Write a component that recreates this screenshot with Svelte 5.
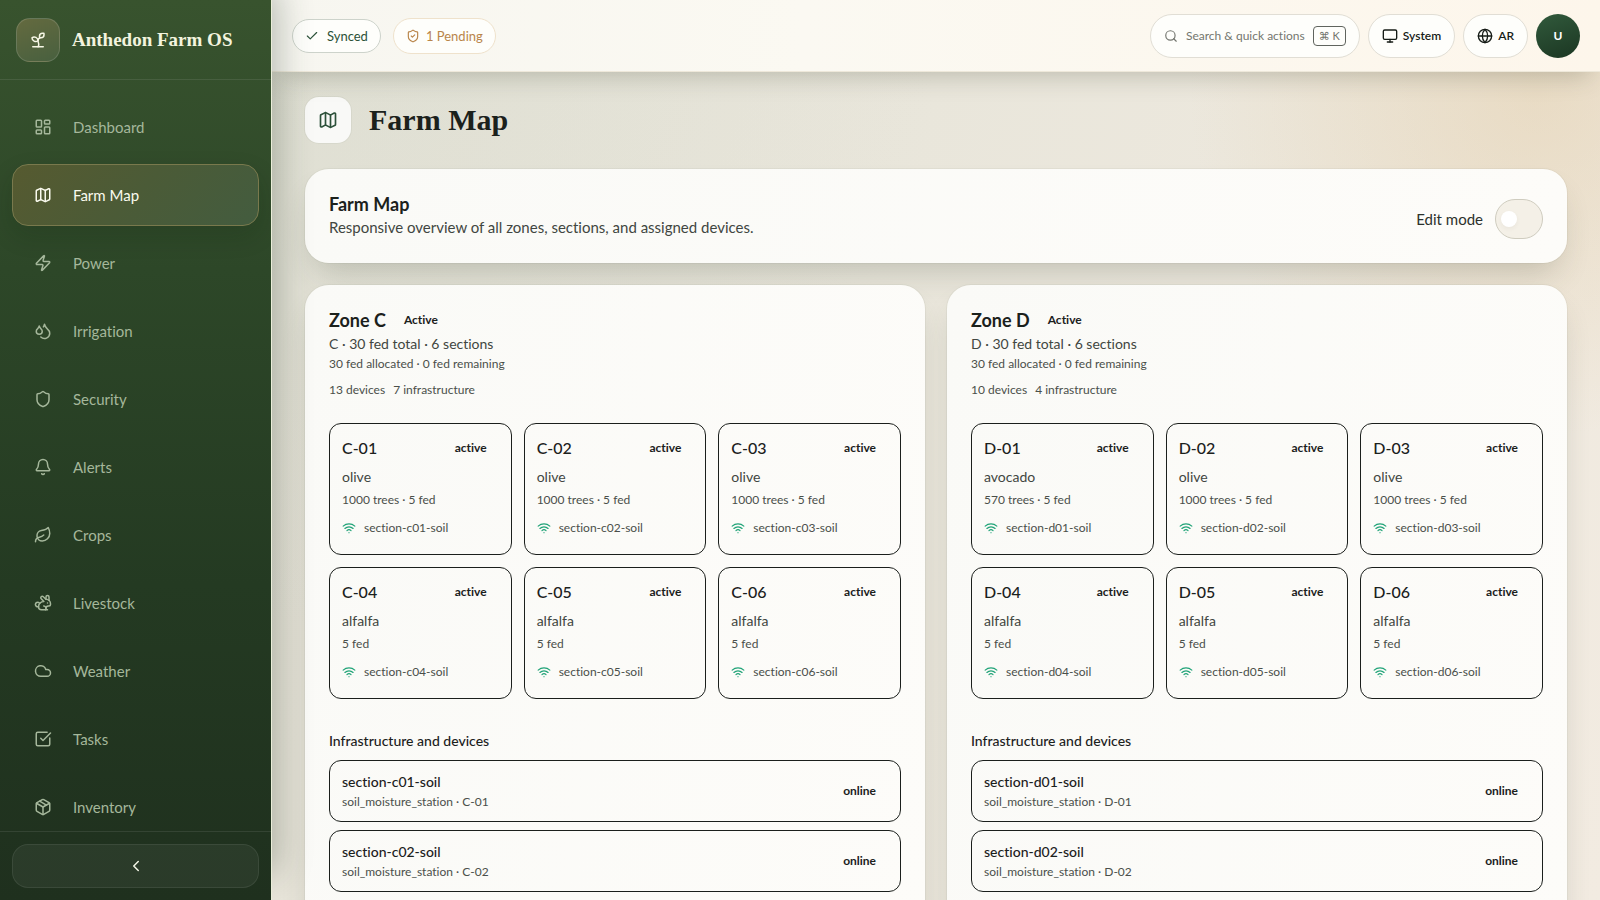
<script lang="ts">
  type Section = { id: string; crop: string; trees?: number; area: number };

  const icons: Record<string, string[]> = {
    sprout: [
      "M14 9.536V7a4 4 0 0 1 4-4h1.5a.5.5 0 0 1 .5.5V5a4 4 0 0 1-4 4 4 4 0 0 0-4 4c0 2 1 3 1 5a5 5 0 0 1-1 3",
      "M4 9a5 5 0 0 1 8 4 5 5 0 0 1-8-4",
      "M5 21h14",
    ],
    dashboard: [
      "M4 3h5a1 1 0 0 1 1 1v7a1 1 0 0 1-1 1H4a1 1 0 0 1-1-1V4a1 1 0 0 1 1-1z",
      "M15 3h5a1 1 0 0 1 1 1v3a1 1 0 0 1-1 1h-5a1 1 0 0 1-1-1V4a1 1 0 0 1 1-1z",
      "M15 12h5a1 1 0 0 1 1 1v7a1 1 0 0 1-1 1h-5a1 1 0 0 1-1-1v-7a1 1 0 0 1 1-1z",
      "M4 16h5a1 1 0 0 1 1 1v3a1 1 0 0 1-1 1H4a1 1 0 0 1-1-1v-3a1 1 0 0 1 1-1z",
    ],
    map: [
      "M14.106 5.553a2 2 0 0 0 1.788 0l3.659-1.83A1 1 0 0 1 21 4.619v12.764a1 1 0 0 1-.553.894l-4.553 2.277a2 2 0 0 1-1.788 0l-4.212-2.106a2 2 0 0 0-1.788 0l-3.659 1.83A1 1 0 0 1 3 19.381V6.618a1 1 0 0 1 .553-.894l4.553-2.277a2 2 0 0 1 1.788 0z",
      "M15 5.764v15",
      "M9 3.236v15",
    ],
    zap: [
      "M4 14a1 1 0 0 1-.78-1.63l9.9-10.2a.5.5 0 0 1 .86.46l-1.92 6.02A1 1 0 0 0 13 10h7a1 1 0 0 1 .78 1.63l-9.9 10.2a.5.5 0 0 1-.86-.46l1.92-6.02A1 1 0 0 0 11 14z",
    ],
    droplets: [
      "M7 16.3c2.2 0 4-1.83 4-4.05 0-1.16-.57-2.26-1.71-3.19S7.29 6.75 7 5.3c-.29 1.45-1.14 2.84-2.29 3.76S3 11.1 3 12.25c0 2.22 1.8 4.05 4 4.05z",
      "M12.56 6.6A10.97 10.97 0 0 0 14 3.02c.5 2.5 2 4.9 4 6.5s3 3.5 3 5.5a6.98 6.98 0 0 1-11.91 4.97",
    ],
    shield: [
      "M20 13c0 5-3.5 7.5-7.66 8.95a1 1 0 0 1-.67-.01C7.5 20.5 4 18 4 13V6a1 1 0 0 1 1-1c2 0 4.5-1.2 6.24-2.72a1.17 1.17 0 0 1 1.52 0C14.51 3.81 17 5 19 5a1 1 0 0 1 1 1z",
    ],
    shieldCheck: [
      "M20 13c0 5-3.5 7.5-7.66 8.95a1 1 0 0 1-.67-.01C7.5 20.5 4 18 4 13V6a1 1 0 0 1 1-1c2 0 4.5-1.2 6.24-2.72a1.17 1.17 0 0 1 1.52 0C14.51 3.81 17 5 19 5a1 1 0 0 1 1 1z",
      "m9 12 2 2 4-4",
    ],
    bell: [
      "M10.268 21a2 2 0 0 0 3.464 0",
      "M3.262 15.326A1 1 0 0 0 4 17h16a1 1 0 0 0 .74-1.673C19.41 13.956 18 12.499 18 8A6 6 0 0 0 6 8c0 4.499-1.411 5.956-2.738 7.326",
    ],
    leaf: [
      "M11 20A7 7 0 0 1 9.8 6.1C15.5 5 17 4.48 19 2c1 2 2 4.18 2 8 0 5.5-4.78 10-10 10Z",
      "M2 21c0-3 1.85-5.36 5.08-6C9.5 14.52 12 13 13 12",
    ],
    rabbit: [
      "M13 16a3 3 0 0 1 2.24 5",
      "M18 12h.01",
      "M18 21h-8a4 4 0 0 1-4-4 7 7 0 0 1 7-7h.2L9.6 6.4a1 1 0 1 1 2.8-2.8L15.8 7h.2c3.3 0 6 2.7 6 6v1a2 2 0 0 1-2 2h-1a3 3 0 0 0-3 3",
      "M20 8.54V4a2 2 0 1 0-4 0v3",
      "M7.612 12.524a3 3 0 1 0-1.6 4.3",
    ],
    cloud: ["M17.5 19H9a7 7 0 1 1 6.71-9h1.79a4.5 4.5 0 1 1 0 9Z"],
    tasks: ["M21 10.5V19a2 2 0 0 1-2 2H5a2 2 0 0 1-2-2V5a2 2 0 0 1 2-2h12.5", "m9 11 3 3L22 4"],
    box: [
      "M11 21.73a2 2 0 0 0 2 0l7-4A2 2 0 0 0 21 16V8a2 2 0 0 0-1-1.73l-7-4a2 2 0 0 0-2 0l-7 4A2 2 0 0 0 3 8v8a2 2 0 0 0 1 1.73z",
      "M12 22V12",
      "M3.29 7 12 12l8.71-5",
      "m7.5 4.27 9 5.15",
    ],
    wifi: [
      "M12 20h.01",
      "M2 8.82a15 15 0 0 1 20 0",
      "M5 12.859a10 10 0 0 1 14 0",
      "M8.5 16.429a5 5 0 0 1 7 0",
    ],
    monitor: [
      "M4 3h16a2 2 0 0 1 2 2v10a2 2 0 0 1-2 2H4a2 2 0 0 1-2-2V5a2 2 0 0 1 2-2z",
      "M8 21h8",
      "M12 17v4",
    ],
    globe: [
      "M12 2a10 10 0 1 0 0 20 10 10 0 0 0 0-20",
      "M12 2a14.5 14.5 0 0 0 0 20 14.5 14.5 0 0 0 0-20",
      "M2 12h20",
    ],
    search: ["M11 3a8 8 0 1 0 0 16 8 8 0 0 0 0-16", "m21 21-4.34-4.34"],
    check: ["M20 6 9 17l-5-5"],
    chevron: ["m15 18-6-6 6-6"],
  };

  const nav = [
    { label: "Dashboard", icon: "dashboard" },
    { label: "Farm Map", icon: "map" },
    { label: "Power", icon: "zap" },
    { label: "Irrigation", icon: "droplets" },
    { label: "Security", icon: "shield" },
    { label: "Alerts", icon: "bell" },
    { label: "Crops", icon: "leaf" },
    { label: "Livestock", icon: "rabbit" },
    { label: "Weather", icon: "cloud" },
    { label: "Tasks", icon: "tasks" },
    { label: "Inventory", icon: "box" },
  ];

  function makeSections(zone: string, crops: string[], trees: number[]): Section[] {
    return crops.map((crop, i) => ({ id: `${zone}-0${i + 1}`, crop, trees: trees[i], area: 5 }));
  }

  const zones = [
    {
      code: "C",
      devices: 13,
      infrastructure: 7,
      sections: makeSections("C", ["olive", "olive", "olive", "alfalfa", "alfalfa", "alfalfa"], [1000, 1000, 1000]),
    },
    {
      code: "D",
      devices: 10,
      infrastructure: 4,
      sections: makeSections("D", ["avocado", "olive", "olive", "alfalfa", "alfalfa", "alfalfa"], [570, 1000, 1000]),
    },
  ];

  let active = $state("Farm Map");
  let editMode = $state(false);

  function deviceName(id: string) {
    return `section-${id.toLowerCase().replace("-", "")}-soil`;
  }
</script>

{#snippet icon(name: string, size: number, stroke = 2)}
  <svg
    width={size}
    height={size}
    viewBox="0 0 24 24"
    fill="none"
    stroke="currentColor"
    stroke-width={stroke}
    stroke-linecap="round"
    stroke-linejoin="round"
    aria-hidden="true"
  >
    {#each icons[name] as d}
      <path {d} />
    {/each}
  </svg>
{/snippet}

<div class="app">
  <aside class="sidebar">
    <div class="brand">
      <span class="brand-logo">{@render icon("sprout", 18)}</span>
      <span class="brand-name">Anthedon Farm OS</span>
    </div>

    <nav class="nav">
      {#each nav as item}
        <a
          href="#{item.icon}"
          class="nav-item"
          class:active={active === item.label}
          onclick={() => (active = item.label)}
        >
          {@render icon(item.icon, 18)}
          {item.label}
        </a>
      {/each}
    </nav>

    <div class="sidebar-footer">
      <button type="button" class="collapse" aria-label="Collapse sidebar">
        {@render icon("chevron", 18)}
      </button>
    </div>
  </aside>

  <div class="content">
    <header class="topbar">
      <div class="status">
        <span class="pill synced">{@render icon("check", 14)} Synced</span>
        <button type="button" class="pill pending">{@render icon("shieldCheck", 14)} 1 Pending</button>
      </div>
      <div class="tools">
        <button type="button" class="tool search">
          {@render icon("search", 14)}
          <span>Search &amp; quick actions</span>
          <kbd>⌘ K</kbd>
        </button>
        <button type="button" class="tool">{@render icon("monitor", 16)} System</button>
        <button type="button" class="tool">{@render icon("globe", 16)} AR</button>
        <button type="button" class="avatar">U</button>
      </div>
    </header>

    <main class="page">
      <div class="page-header">
        <span class="page-icon">{@render icon("map", 20)}</span>
        <h1>Farm Map</h1>
      </div>

      <section class="card overview">
        <div>
          <h2>Farm Map</h2>
          <p class="lead">Responsive overview of all zones, sections, and assigned devices.</p>
        </div>
        <label class="edit">
          Edit mode
          <input type="checkbox" role="switch" bind:checked={editMode} />
        </label>
      </section>

      <div class="zones">
        {#each zones as zone}
          <section class="card zone">
            <div class="zone-title">
              <h2>Zone {zone.code}</h2>
              <span class="badge">Active</span>
            </div>
            <p class="zone-summary">{zone.code} · 30 fed total · 6 sections</p>
            <p class="small">30 fed allocated · 0 fed remaining</p>
            <div class="counts small">
              <span>{zone.devices} devices</span>
              <span>{zone.infrastructure} infrastructure</span>
            </div>

            <div class="sections">
              {#each zone.sections as section}
                <article class="tile">
                  <div class="tile-head">
                    <h3>{section.id}</h3>
                    <span class="badge">active</span>
                  </div>
                  <p class="crop">{section.crop}</p>
                  <p class="meta">{section.trees ? `${section.trees} trees · ` : ""}{section.area} fed</p>
                  <div class="device">
                    {@render icon("wifi", 14)}
                    <span>{deviceName(section.id)}</span>
                  </div>
                </article>
              {/each}
            </div>

            <h4>Infrastructure and devices</h4>
            <ul class="devices">
              {#each zone.sections.slice(0, 2) as section}
                <li>
                  <div>
                    <p class="device-name">{deviceName(section.id)}</p>
                    <p class="small">soil_moisture_station · {section.id}</p>
                  </div>
                  <span class="badge">online</span>
                </li>
              {/each}
            </ul>
          </section>
        {/each}
      </div>
    </main>
  </div>
</div>

<style>
  :global(body) {
    margin: 0;
    overflow: hidden;
  }

  .app {
    display: flex;
    height: 100vh;
    font-family: "Avenir Next", Lato, "Open Sans", sans-serif;
    font-size: 14px;
    font-variant-ligatures: none;
    color: #1b211c;
    background:
      radial-gradient(circle at 96% 10%, rgba(220, 190, 140, 0.32), transparent 20%),
      radial-gradient(circle at 20% 0%, rgba(205, 213, 198, 0.3), transparent 40%),
      linear-gradient(110deg, #e4e1d6 0%, #e9e6db 50%, #f2ebe1 100%);
  }

  h1,
  h2,
  h3,
  h4,
  p,
  ul {
    margin: 0;
    padding: 0;
  }

  button {
    font: inherit;
    cursor: pointer;
  }

  svg {
    flex: none;
  }

  .sidebar {
    position: relative;
    z-index: 2;
    flex: none;
    display: flex;
    flex-direction: column;
    box-sizing: border-box;
    width: 272px;
    border-right: 1px solid #e9edd8;
    background: linear-gradient(180deg, #38532e 0%, #2d4728 30%, #243a22 65%, #1f301e 100%);
    box-shadow: 14px -20px 32px -8px rgba(40, 55, 40, 0.3);
  }

  .brand {
    display: flex;
    align-items: center;
    gap: 12px;
    padding: 18px 16px 17px;
    border-bottom: 1px solid rgba(255, 255, 255, 0.09);
  }

  .brand-logo {
    display: flex;
    align-items: center;
    justify-content: center;
    box-sizing: border-box;
    width: 44px;
    height: 44px;
    border: 1px solid rgba(255, 255, 255, 0.14);
    border-radius: 14px;
    background: linear-gradient(160deg, #646a3f, #48603f);
    color: #f7f7e6;
  }

  .brand-name {
    font-family: "Iowan Old Style", "Liberation Serif", serif;
    font-size: 19px;
    font-weight: 600;
    color: #f3f4df;
    white-space: nowrap;
  }

  .nav {
    flex: 1;
    min-height: 0;
    display: flex;
    flex-direction: column;
    gap: 6px;
    padding: 16px 12px 0;
    overflow-y: auto;
    scrollbar-width: none;
  }

  .nav-item {
    flex: none;
    display: flex;
    align-items: center;
    gap: 21px;
    box-sizing: border-box;
    height: 62px;
    padding: 0 21px;
    border: 1px solid transparent;
    border-radius: 16px;
    color: #a5b79b;
    font-size: 15px;
    text-decoration: none;
  }

  .nav-item.active {
    border-color: #79794d;
    background: linear-gradient(135deg, #565a30 0%, #4b5b37 50%, #435c3f 100%);
    box-shadow: 0 10px 24px rgba(15, 30, 15, 0.16);
    color: #fafaee;
  }

  .sidebar-footer {
    padding: 12px;
    border-top: 1px solid rgba(255, 255, 255, 0.09);
  }

  .collapse {
    display: flex;
    align-items: center;
    justify-content: center;
    width: 100%;
    height: 44px;
    border: 1px solid rgba(255, 255, 255, 0.08);
    border-radius: 16px;
    background: rgba(255, 255, 255, 0.05);
    color: #f2f5e6;
  }

  .content {
    flex: 1;
    min-width: 0;
    display: flex;
    flex-direction: column;
  }

  .topbar {
    position: relative;
    z-index: 1;
    display: flex;
    align-items: center;
    justify-content: space-between;
    box-sizing: border-box;
    height: 72px;
    padding: 0 20px;
    border-bottom: 1px solid #eee8da;
    background: linear-gradient(90deg, #f7f6f0 0%, #fbf9f2 40%, #fdf6eb 100%);
    box-shadow: 0 14px 24px -10px rgba(60, 65, 45, 0.26);
  }

  .status {
    display: flex;
    align-items: center;
    gap: 12px;
  }

  .pill,
  .tool {
    display: flex;
    align-items: center;
    box-sizing: border-box;
    border: 1px solid #e1ded5;
    border-radius: 22px;
    background: #fefefb;
    white-space: nowrap;
  }

  .pill {
    gap: 8px;
    height: 34px;
    padding: 0 12px;
    font-size: 13px;
    font-weight: 400;
  }

  .synced {
    border-color: #cdd3cb;
    color: #2b5138;
  }

  .pending {
    height: 36px;
    gap: 6px;
    border-color: #efe2cc;
    color: #b9854a;
  }

  .tools {
    display: flex;
    gap: 8px;
  }

  .tool {
    gap: 5px;
    height: 44px;
    padding: 0 13px;
    color: #161c17;
    font-size: 12px;
    font-weight: 600;
  }

  .search {
    gap: 8px;
    color: #74766f;
    font-weight: 400;
  }

  kbd {
    box-sizing: border-box;
    height: 20px;
    padding: 0 5px;
    border: 1px solid #60645e;
    border-radius: 4px;
    font-family: Lato, "DejaVu Sans", sans-serif;
    font-size: 11px;
    line-height: 18px;
  }

  .avatar {
    width: 44px;
    height: 44px;
    padding: 0;
    border: none;
    border-radius: 50%;
    background: linear-gradient(160deg, #315a3c, #1b3622);
    color: #fff;
    font-size: 12px;
    font-weight: 700;
  }

  .page {
    flex: 1;
    min-height: 0;
    padding: 25px 33px;
    overflow-y: auto;
    scrollbar-width: none;
  }

  .page-header {
    display: flex;
    align-items: center;
    gap: 18px;
    margin-bottom: 26px;
  }

  .page-icon {
    display: flex;
    align-items: center;
    justify-content: center;
    width: 46px;
    height: 46px;
    border-radius: 14px;
    background: #f9f9f7;
    box-shadow: 0 0 0 1px rgba(60, 70, 60, 0.05);
    color: #2c5039;
  }

  h1 {
    font-family: "Iowan Old Style", "Liberation Serif", serif;
    font-size: 30px;
    font-weight: 600;
    line-height: 46px;
  }

  h2 {
    font-size: 18px;
    font-weight: 700;
    line-height: 22px;
  }

  .card {
    padding: 24px;
    border-radius: 24px;
    background: linear-gradient(100deg, #fafaf7, #fdfcf9);
    box-shadow:
      0 0 0 1px rgba(60, 70, 50, 0.05),
      0 18px 32px -10px rgba(60, 65, 50, 0.24);
  }

  .overview {
    display: flex;
    align-items: flex-end;
    justify-content: space-between;
    margin-bottom: 22px;
  }

  .lead {
    color: #414641;
    font-size: 15px;
    line-height: 24px;
  }

  .edit {
    display: flex;
    align-items: center;
    gap: 12px;
    color: #2c312c;
    font-size: 15px;
  }

  .edit input {
    appearance: none;
    display: flex;
    align-items: center;
    box-sizing: border-box;
    width: 48px;
    height: 40px;
    margin: 0;
    padding: 0 5px;
    border: 1px solid #cfccbf;
    border-radius: 20px;
    background: #f4f0e7;
    cursor: pointer;
  }

  .edit input::before {
    content: "";
    width: 16px;
    height: 16px;
    border-radius: 50%;
    background: #fff;
    box-shadow: 0 2px 4px rgba(60, 60, 50, 0.05);
  }

  .edit input:checked {
    justify-content: flex-end;
    background: #2c5039;
  }

  .zones {
    display: grid;
    grid-template-columns: repeat(2, minmax(0, 1fr));
    gap: 22px;
  }

  .zone {
    padding-bottom: 48px;
  }

  .zone-title {
    display: flex;
    align-items: center;
    gap: 6px;
    margin-bottom: 2px;
  }

  .badge {
    padding: 0 12px;
    font-size: 12px;
    font-weight: 700;
    line-height: 18px;
  }

  .zone-summary {
    color: #414641;
    font-size: 14px;
    line-height: 22px;
  }

  .small,
  .meta,
  .device {
    color: #4a4f4a;
    font-size: 12px;
    line-height: 18px;
  }

  .counts {
    display: flex;
    gap: 8px;
    margin: 8px 0 24px;
  }

  .sections {
    display: grid;
    grid-template-columns: repeat(3, minmax(0, 1fr));
    gap: 12px;
    margin-bottom: 31px;
  }

  .tile {
    padding: 12px 12px 16px;
    border: 1px solid #1b1f1c;
    border-radius: 12px;
  }

  .tile-head {
    display: flex;
    align-items: center;
    justify-content: space-between;
    margin-bottom: 6px;
  }

  h3 {
    font-size: 16px;
    font-weight: 500;
    line-height: 24px;
  }

  .crop {
    margin-bottom: 2px;
    color: #414641;
    font-size: 14px;
    line-height: 22px;
  }

  .meta {
    margin-bottom: 8px;
    line-height: 20px;
  }

  .device {
    display: flex;
    align-items: center;
    gap: 8px;
    line-height: 20px;
  }

  .device svg {
    color: #1fa377;
  }

  h4 {
    margin-bottom: 8px;
    font-size: 14px;
    font-weight: 500;
    line-height: 22px;
  }

  .devices {
    display: flex;
    flex-direction: column;
    gap: 8px;
    list-style: none;
  }

  .devices li {
    display: flex;
    align-items: center;
    justify-content: space-between;
    padding: 10px 12px;
    border: 1px solid #1b1f1c;
    border-radius: 12px;
  }

  .device-name {
    font-size: 14px;
    font-weight: 500;
    line-height: 22px;
  }
</style>
